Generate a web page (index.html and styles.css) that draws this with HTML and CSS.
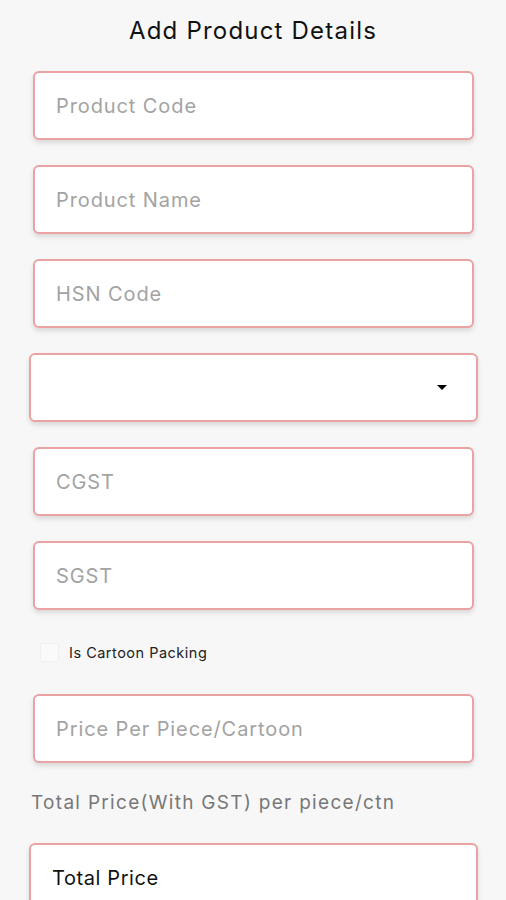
FILE: index.html
```
<!DOCTYPE html>
<html lang="en">
<head>
    <meta charset="UTF-8">
    <meta name="viewport" content="width=device-width, initial-scale=1.0">
    <title>Add Product Details</title>
    <link rel="stylesheet" href="styles.css">
</head>

<body>
    <h1 class="page-title">Add Product Details</h1>

    <form class="product-form">
        <div class="field"><span class="placeholder">Product Code</span></div>
        <div class="field"><span class="placeholder">Product Name</span></div>
        <div class="field"><span class="placeholder">HSN Code</span></div>

        <div class="field field--wide field--select">
            <span class="select-value"></span>
            <svg class="caret" width="10" height="5" viewBox="0 0 10 5"><path d="M0 0 L10 0 L5 5 Z" fill="#000"/></svg>
        </div>

        <div class="field"><span class="placeholder">CGST</span></div>
        <div class="field"><span class="placeholder">SGST</span></div>

        <label class="check-row">
            <span class="checkbox"></span>
            <span class="check-label">Is Cartoon Packing</span>
        </label>

        <div class="field"><span class="placeholder">Price Per Piece/Cartoon</span></div>

        <p class="hint">Total Price(With GST) per piece/ctn</p>

        <div class="field field--wide"><span class="value">Total Price</span></div>
    </form>
</body>
</html>
```
FILE: styles.css
```
body {
    margin: 0;
    background-color: #f7f7f7;
    font-family: Inter, Roboto, Arial, sans-serif;
}
.page-title {
    margin: 0;
    padding-top: 16px;
    line-height: 30px;
    font-size: 24px;
    font-weight: 400;
    letter-spacing: 1.2px;
    text-align: center;
    color: #111;
}
.product-form {
    display: flex;
    flex-direction: column;
    gap: 25px;
    margin-top: 25px;
}
.field {
    display: flex;
    align-items: center;
    height: 69px;
    box-sizing: border-box;
    margin: 0 32px 0 33px;
    padding: 0 21px;
    background-color: #fff;
    border: 2px solid #eaa2a2;
    border-radius: 6px;
    box-shadow: 0 3px 5px rgba(0, 0, 0, 0.12);
}
.field--wide {
    margin: 0 28px 0 29px;
}
.field--select {
    justify-content: space-between;
    padding-right: 29px;
}
.placeholder {
    font-size: 20px;
    letter-spacing: 0.9px;
    color: #a3a3a3;
}
.value {
    font-size: 20px;
    letter-spacing: 0.6px;
    color: #111;
}
.check-row {
    display: flex;
    align-items: center;
    gap: 10px;
    height: 34px;
    margin-left: 40px;
}
.checkbox {
    width: 17px;
    height: 17px;
    border: 1px solid #f0f0f0;
    border-radius: 2px;
    background-color: #fafafa;
}
.check-label {
    font-size: 14.5px;
    letter-spacing: 0.5px;
    color: #222;
}
.hint {
    margin: 0 0 0 31px;
    line-height: 30px;
    font-size: 19px;
    letter-spacing: 1.3px;
    color: #777;
}
```
